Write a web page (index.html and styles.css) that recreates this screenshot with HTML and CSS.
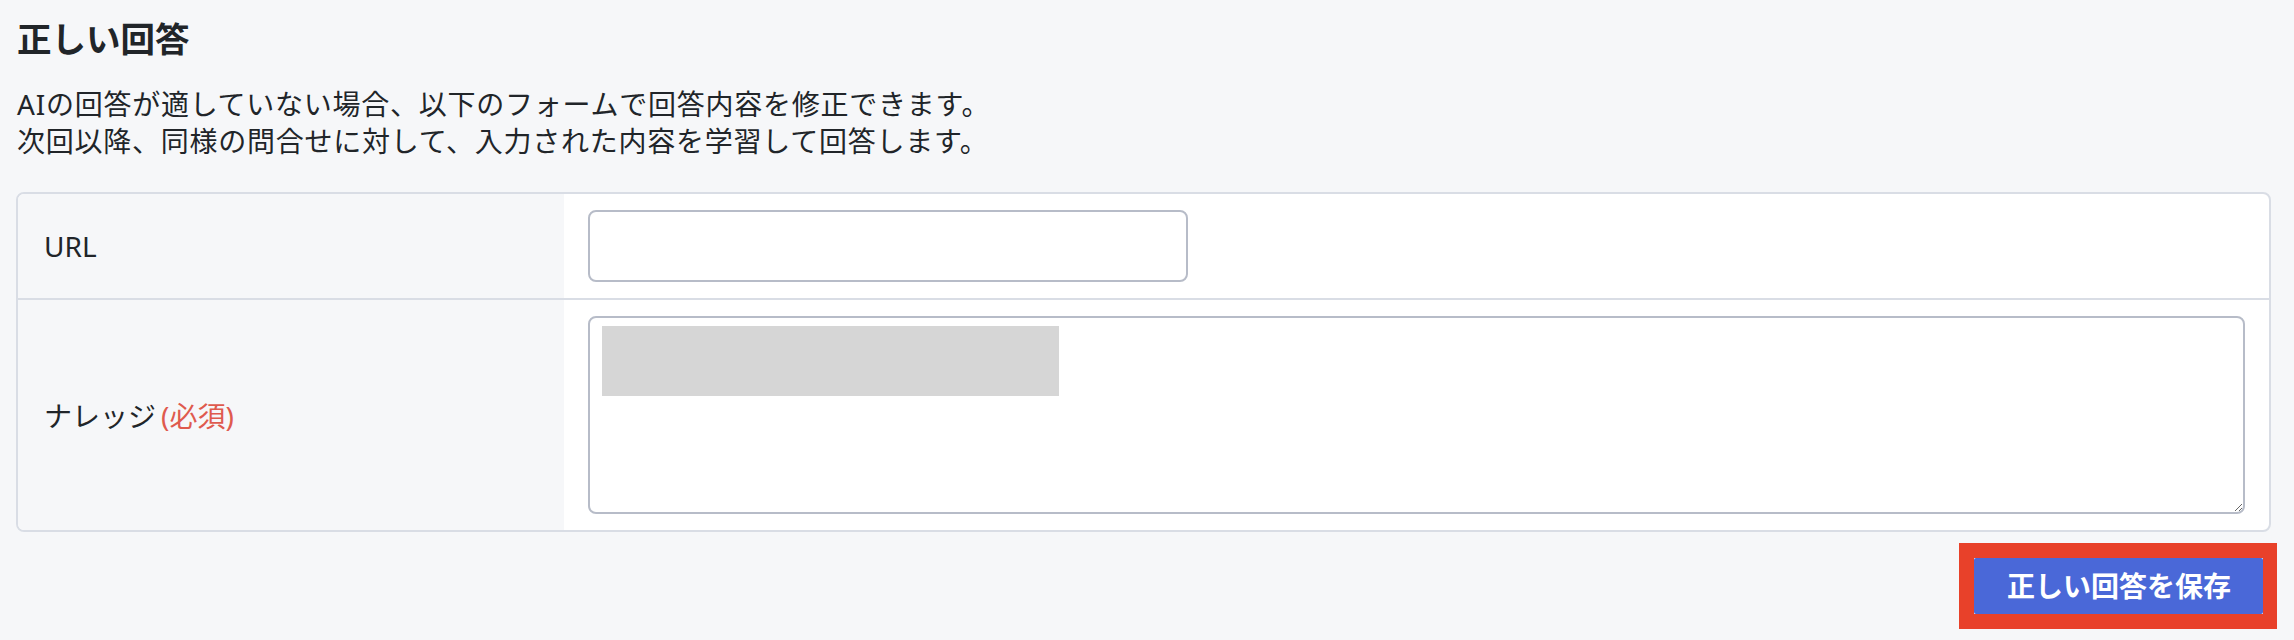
FILE: index.html
```html
<!DOCTYPE html>
<html lang="ja">
<head>
<meta charset="utf-8">
<title>正しい回答</title>
<link rel="stylesheet" href="styles.css">
</head>
<body>
<main class="page">
  <h2 class="title">正しい回答</h2>
  <p class="desc">AIの回答が適していない場合、以下のフォームで回答内容を修正できます。<br>次回以降、同様の問合せに対して、入力された内容を学習して回答します。</p>
  <div class="card">
    <div class="row">
      <div class="label">URL</div>
      <div class="value"><input class="input" type="text"></div>
    </div>
    <div class="row row-last">
      <div class="label">ナレッジ<span class="req">(必須)</span></div>
      <div class="value">
        <div class="ta-wrap">
          <textarea class="textarea"></textarea>
          <span class="redact"></span>
        </div>
      </div>
    </div>
  </div>
  <div class="actions">
    <div class="highlight"><button class="btn" type="button">正しい回答を保存</button></div>
  </div>
</main>
</body>
</html>
```
FILE: styles.css
```css
* { box-sizing: border-box; }
html, body { margin: 0; padding: 0; }
body {
  background: #f6f7f9;
  color: #212529;
  font-family: "Noto Sans", "Noto Sans CJK JP", sans-serif;
  width: 2294px;
  height: 640px;
  overflow: hidden;
}
.page {
  padding: 12px 23px 0 16px;
}
.title {
  margin: 0;
  font-size: 34.5px;
  line-height: 54px;
  font-weight: 700;
  padding-left: 1px;
}
.desc {
  margin: 20px 0 0;
  font-size: 28px;
  line-height: 37px;
  letter-spacing: 0.75px;
  padding-left: 1px;
}
.card {
  margin-top: 32px;
  border: 2px solid #d9dde5;
  border-radius: 8px;
  background: #fff;
  overflow: hidden;
}
.row {
  display: grid;
  grid-template-columns: 546px 1fr;
  border-bottom: 2px solid #d9dde5;
}
.row-last { border-bottom: none; }
.label {
  background: #f6f7f9;
  display: flex;
  align-items: center;
  padding-left: 26px;
  font-size: 28px;
}
.req {
  color: #df5a4e;
  margin-left: 5px;
}
.value {
  padding: 16px 24px;
}
.input {
  display: block;
  width: 600px;
  height: 72px;
  border: 2px solid #b7bcc8;
  border-radius: 8px;
  background: #fff;
  outline: none;
}
.ta-wrap {
  position: relative;
}
.textarea {
  display: block;
  width: 100%;
  height: 198px;
  border: 2px solid #b7bcc8;
  border-radius: 8px;
  background: #fff;
  outline: none;
  resize: vertical;
}
.redact {
  position: absolute;
  left: 14px;
  top: 10px;
  width: 457px;
  height: 70px;
  background: #d6d6d6;
}
.actions {
  display: flex;
  justify-content: flex-end;
  margin-top: 11px;
  margin-right: -6px;
}
.highlight {
  border: 15px solid #e8412a;
  border-right-width: 14px;
}
.btn {
  display: block;
  height: 56px;
  padding: 0 32px 0 33px;
  border: none;
  border-radius: 2px;
  background: #4a68d8;
  color: #fff;
  font-family: "Noto Sans", "Noto Sans CJK JP", sans-serif;
  font-weight: 700;
  font-size: 28px;
  line-height: 56px;
}
```
